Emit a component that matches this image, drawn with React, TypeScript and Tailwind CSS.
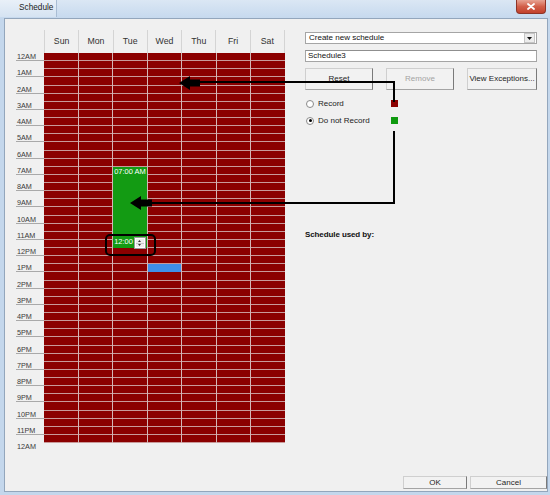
import React from 'react';

const DAYS = ['Sun', 'Mon', 'Tue', 'Wed', 'Thu', 'Fri', 'Sat'];
const HOURS = [
  '12AM', '1AM', '2AM', '3AM', '4AM', '5AM', '6AM', '7AM', '8AM', '9AM', '10AM', '11AM',
  '12PM', '1PM', '2PM', '3PM', '4PM', '5PM', '6PM', '7PM', '8PM', '9PM', '10PM', '11PM',
];

// half-hour rows; Tue 07:00-12:00 is the block being edited
const GREEN_DAY = 2;
const GREEN_FROM = 14;
const GREEN_TO = 24;
const BLUE_DAY = 3;
const BLUE_ROW = 26;

function GreenBlock() {
  return (
    <div className="flex h-[81.25px] flex-col justify-between bg-[#139b13] text-white">
      <div className="pl-[1px] text-[7.5px] leading-[9px] whitespace-nowrap">07:00 AM</div>
      <div className="flex items-end justify-between pl-[1px] pr-[1px]">
        <span className="mb-[2px] text-[7.5px] leading-[8px]">12:00</span>
        <div className="mb-[-1px] flex h-[12px] w-[12px] flex-col border border-[#9a9a9a] bg-white p-[1px]">
          <div className="flex flex-1 items-center justify-center border-b border-[#c8c8c8] bg-[#eeeeee]">
            <svg width="3" height="2" viewBox="0 0 3 2"><path d="M0 2 L1.5 0 L3 2 Z" fill="#333" /></svg>
          </div>
          <div className="flex flex-1 items-center justify-center bg-[#eeeeee]">
            <svg width="3" height="2" viewBox="0 0 3 2"><path d="M0 0 L1.5 2 L3 0 Z" fill="#333" /></svg>
          </div>
        </div>
      </div>
    </div>
  );
}

function DayColumn({ day }: { day: number }) {
  const rows: React.ReactNode[] = [];
  for (let r = 0; r < 48; r++) {
    if (day === GREEN_DAY && r === GREEN_FROM) {
      rows.push(<GreenBlock key="green" />);
      r = GREEN_TO - 1;
      continue;
    }
    const blue = day === BLUE_DAY && r === BLUE_ROW;
    rows.push(
      <div
        key={r}
        className={
          blue
            ? 'h-[8.125px] bg-[#3f8fe9]'
            : 'h-[8.125px] border-b border-[#c99a9a]'
        }
      />
    );
  }
  return (
    <div className={`flex h-[390px] flex-1 flex-col ${day < 6 ? 'border-r border-[#d3b6b6]' : ''}`}>
      {rows}
    </div>
  );
}

function WinButton({ label, disabled, className }: { label: string; disabled?: boolean; className: string }) {
  return (
    <div
      className={`flex items-center justify-center border border-[#cfcfcf] border-r-[#7a7a7a] border-b-[#a4a4a4] bg-[#f2f2f2] text-[8px] ${
        disabled ? 'text-[#a3a3a3]' : 'text-[#1e1e1e]'
      } ${className}`}
    >
      {label}
    </div>
  );
}

function Radio({ checked, label, swatch }: { checked?: boolean; label: string; swatch: string }) {
  return (
    <div className="flex h-[17px] items-center">
      <div className="ml-[1px] flex h-[8px] w-[8px] items-center justify-center rounded-full border border-[#8a8a8a] bg-white">
        {checked && <div className="h-[3px] w-[3px] rounded-full bg-black" />}
      </div>
      <span className="ml-[4px] w-[73px] text-[8px] text-[#222]">{label}</span>
      <div className={`h-[7px] w-[7px] ${swatch}`} />
    </div>
  );
}

export default function App() {
  return (
    <div className="relative flex h-[495px] w-[550px] flex-col overflow-hidden bg-[#c4d7ec] font-['Liberation_Sans',Arial,sans-serif]">
      {/* title bar */}
      <div className="flex h-[18px] items-start bg-gradient-to-b from-[#dbe7f4] to-[#c6d9ee]">
        <div className="flex h-[17px] w-[57px] items-center border-r border-[#a9bdd4] bg-gradient-to-b from-[#e9f0f8] to-[#d5e3f2] pl-[19px] text-[8.25px] text-[#1b1b1b]">
          Schedule
        </div>
        <div className="ml-auto mr-[4px] flex h-[14px] w-[30px] items-center justify-center rounded-b-[4px] border border-t-0 border-[#8e3427] bg-gradient-to-b from-[#e7a393] via-[#d2604a] to-[#c2412c]">
          <svg width="8" height="7" viewBox="0 0 8 7">
            <path d="M1 1 L7 6 M7 1 L1 6" stroke="white" strokeWidth="1.8" strokeLinecap="round" />
          </svg>
        </div>
      </div>

      {/* client area */}
      <div className="mb-[3px] ml-[4px] mr-[2px] flex flex-1 flex-col border border-[#93a6bc] bg-[#f0f0f0]">
        <div className="flex pl-[11px] pt-[11px]">
          {/* schedule grid */}
          <div className="flex flex-col">
            <div className="flex h-[23px]">
              <div className="w-[28px]" />
              <div className="flex w-[241px]">
                {DAYS.map((d, i) => (
                  <div
                    key={d}
                    className={`flex flex-1 items-center justify-center border-l border-[#d4d4d4] text-[8.75px] text-[#333] ${
                      i === 6 ? 'border-r' : ''
                    }`}
                  >
                    {d}
                  </div>
                ))}
              </div>
            </div>
            <div className="flex items-start">
              <div className="flex w-[28px] flex-col">
                {HOURS.map((h) => (
                  <div key={h} className="h-[16.25px]">
                    <div className="h-[8.125px] border-b border-[#a9a9a9] pl-[1px] text-[7.25px] leading-[8px] text-[#3a3a3a]">
                      {h}
                    </div>
                  </div>
                ))}
                <div className="pl-[1px] text-[7.25px] leading-[8px] text-[#3a3a3a]">12AM</div>
              </div>
              <div className="flex w-[241px] bg-[#8b0000]">
                {DAYS.map((d, i) => (
                  <DayColumn key={d} day={i} />
                ))}
              </div>
            </div>
          </div>

          {/* right side controls */}
          <div className="ml-[20px] mt-[2px] flex w-[232px] flex-col">
            <div className="flex h-[12px] items-center border border-[#a5a5a5] bg-white">
              <span className="flex-1 pl-[3px] text-[8px] leading-[10px] text-[#111]">Create new schedule</span>
              <div className="mr-[1px] flex h-[10px] w-[11px] items-center justify-center border border-[#c5c5c5] bg-[#ececec]">
                <svg width="5" height="3" viewBox="0 0 5 3"><path d="M0 0 L5 0 L2.5 3 Z" fill="#111" /></svg>
              </div>
            </div>
            <div className="mt-[6px] flex h-[12px] items-center border border-[#a5a5a5] border-t-[#8f8f8f] bg-white pl-[2px] text-[8px] text-[#111]">
              Schedule3
            </div>
            <div className="mt-[6px] flex justify-between">
              <WinButton label="Reset" className="h-[22px] w-[68px]" />
              <WinButton label="Remove" disabled className="h-[22px] w-[68px]" />
              <WinButton label="View Exceptions..." className="h-[22px] w-[70px]" />
            </div>
            <div className="mt-[5px] flex flex-col">
              <Radio label="Record" swatch="bg-[#8b0000]" />
              <Radio label="Do not Record" checked swatch="bg-[#0f9a0f]" />
            </div>
            <div className="mt-[101px] text-[8px] font-bold leading-[10px] tracking-[-0.1px] text-[#111]">
              Schedule used by:
            </div>
          </div>
        </div>

        <div className="flex-1" />
        <div className="flex justify-end gap-[3px] pb-[2px]">
          <WinButton label="OK" className="h-[13px] w-[64px]" />
          <WinButton label="Cancel" className="h-[13px] w-[77px]" />
        </div>
      </div>

      {/* annotations drawn over the dialog */}
      <div className="pointer-events-none absolute left-[105px] top-[234px] h-[22px] w-[51px] rounded-[5px] border-2 border-black" />
      <svg className="pointer-events-none absolute left-0 top-0" width="550" height="495" viewBox="0 0 550 495">
        <path d="M394 102 V82 H199" fill="none" stroke="black" strokeWidth="2" />
        <polygon points="179,83 190,76 190,79.5 200,79.5 200,86.5 190,86.5 190,90" fill="black" />
        <path d="M394 131 V203 H150" fill="none" stroke="black" strokeWidth="2" />
        <polygon points="130,203 141,196 141,199.5 152,199.5 152,206.5 141,206.5 141,210" fill="black" />
      </svg>
    </div>
  );
}
